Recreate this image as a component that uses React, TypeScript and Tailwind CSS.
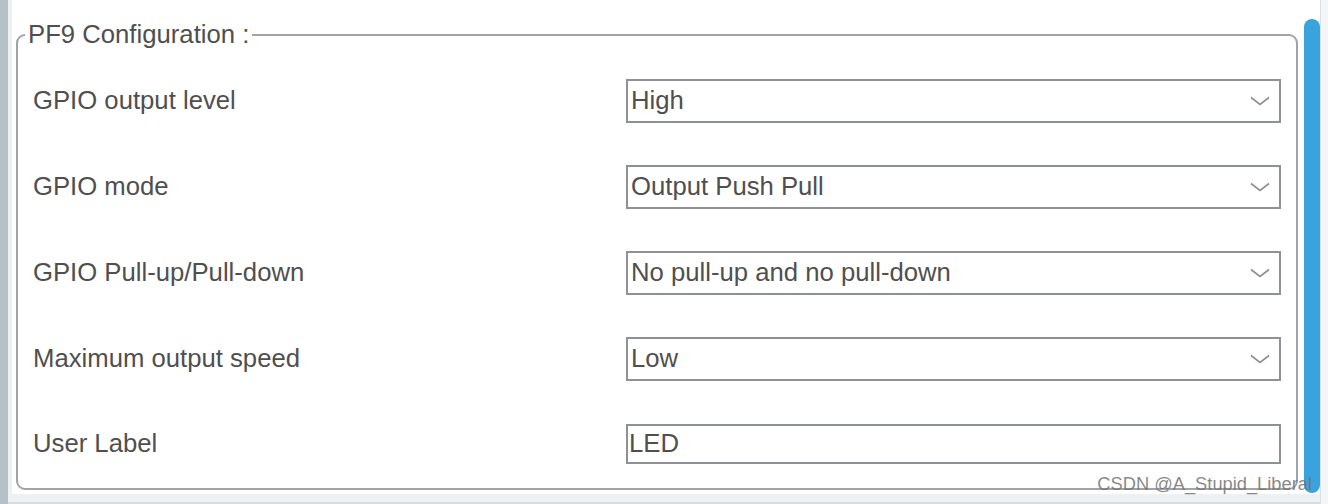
const rows = [
  { label: 'GPIO output level', value: 'High' },
  { label: 'GPIO mode', value: 'Output Push Pull' },
  { label: 'GPIO Pull-up/Pull-down', value: 'No pull-up and no pull-down' },
  { label: 'Maximum output speed', value: 'Low' },
];

function Chevron() {
  return (
    <svg width="20" height="10" viewBox="0 0 20 10" className="shrink-0">
      <polyline points="1,1.5 10,8.5 19,1.5" fill="none" stroke="#8f8f8f" strokeWidth="1.6" />
    </svg>
  );
}

export default function App() {
  return (
    <div className="relative flex h-[504px] w-[1328px] overflow-hidden bg-[#eef1f4] font-['Liberation_Sans',Arial,sans-serif] text-[#4f4f4f]">
      {/* left frame */}
      <div className="w-2 bg-[#b6c1c7]" />

      <div className="flex flex-1 flex-col">
        <div className="flex flex-1 min-h-0">
          <div className="w-1 bg-[#eef1f4]" />
          <div className="flex flex-1 bg-white">
            {/* Configuration panel */}
            <div className="flex-1 pl-1 pr-[6px] pt-5">
              <fieldset className="h-[470px] rounded-[9px] border-2 border-[#a0a4a8] px-[15px]">
                <legend className="-ml-[8px] px-[3px] text-[25.7px] leading-[29px]">PF9 Configuration :</legend>
                <div className="flex flex-col gap-[42px] pt-[30px]">
                  {rows.map((r) => (
                    <div key={r.label} className="grid h-[44px] grid-cols-[593px_1fr] items-center">
                      <span className="text-[25.7px] leading-none">{r.label}</span>
                      <div className="flex h-[44px] items-center justify-between border-2 border-[#8e9296] pl-[3px] pr-[9px]">
                        <span className="text-[25.7px] leading-none">{r.value}</span>
                        <Chevron />
                      </div>
                    </div>
                  ))}
                  <div className="-mt-[1px] grid h-[44px] grid-cols-[593px_1fr] items-center">
                    <span className="text-[25.7px] leading-none">User Label</span>
                    <div className="flex h-[40px] items-center border-2 border-[#8e9296] pl-[1px]">
                      <span className="text-[25.7px] leading-none">LED</span>
                    </div>
                  </div>
                </div>
              </fieldset>
            </div>

            {/* scrollbar */}
            <div className="flex w-4 flex-col pt-[19px] pb-[1px]">
              <div className="flex-1 rounded-full bg-[#38a3dd]" />
            </div>
          </div>
        </div>
        <div className="h-[10px] border-b-2 border-[#d6dbdf] bg-[#eef1f4]" />
      </div>

      {/* right frame */}
      <div className="w-2 border-l border-[#dde2e6] bg-[#f3f5f7]" />

      {/* watermark */}
      <span className="absolute right-[16px] top-[473px] text-[18.3px] leading-[21px] text-[#737373]/85">
        CSDN @A_Stupid_Liberal
      </span>
    </div>
  );
}
